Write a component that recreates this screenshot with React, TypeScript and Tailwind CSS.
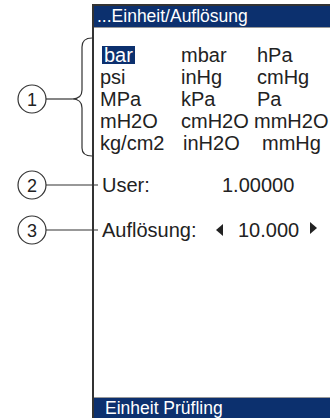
import React from 'react';

const units: [string, string][][] = [
  [['bar', ''], ['mbar', ''], ['hPa', '']],
  [['psi', ''], ['inHg', ''], ['cmHg', '']],
  [['MPa', ''], ['kPa', ''], ['Pa', '']],
  [['mH2O', ''], ['cmH2O', ''], ['mmH2O', '-ml-[3px]']],
  [['kg/cm2', ''], ['inH2O', 'ml-[2px]'], ['mmHg', 'ml-[5px]']],
];

function Callouts() {
  return (
    <svg width="92" height="418" viewBox="0 0 92 418" className="shrink-0 overflow-visible">
      <g stroke="#333" strokeWidth="1.2" fill="none">
        <path d="M92 38 C86 38 82 40 82 47 L82 90 C82 96 78 99 72 99 C78 99 82 102 82 108 L82 148 C82 154 86 156 92 156" />
        <line x1="46" y1="99" x2="72" y2="99" />
        <line x1="46" y1="185" x2="98" y2="185" />
        <line x1="46" y1="230" x2="98" y2="230" />
        <circle cx="32" cy="99" r="14" fill="#fff" />
        <circle cx="32" cy="185" r="14" fill="#fff" />
        <circle cx="32" cy="230" r="14" fill="#fff" />
      </g>
      <g fill="#222" fontSize="18" fontFamily="'Liberation Sans', Arial, sans-serif" textAnchor="middle">
        <text x="32" y="105.5">1</text>
        <text x="32" y="191.5">2</text>
        <text x="32" y="236.5">3</text>
      </g>
    </svg>
  );
}

export default function App() {
  return (
    <div className="w-[330px] h-[418px] bg-white flex overflow-hidden font-['Liberation_Sans',Arial,sans-serif] text-[#222]">
      <Callouts />
      <div className="w-[260px] shrink-0 mt-[4px] border-l-2 border-t-2 border-[#333] flex flex-col">
        <div className="h-[22px] bg-[#0c306e] text-white text-[17.5px] leading-[21px] pl-[3px] border-b border-[#9a9a9a] whitespace-nowrap">
          ...Einheit/Auflösung
        </div>
        <div className="grid grid-cols-[81px_76px_1fr] pl-[6px] pt-[16px] text-[20px] leading-[22px]">
          {units.flat().map(([u, cls]) => (
            <div key={u} className={`whitespace-nowrap ${cls}`}>
              {u === 'bar' ? (
                <span className="inline-block bg-[#0c306e] text-white leading-[18px] px-[2px] ml-[2px]">bar</span>
              ) : (
                u
              )}
            </div>
          ))}
        </div>
        <div className="flex items-center pl-[8px] mt-[20px] text-[20px] leading-[22px]">
          <span className="w-[114px]">User:</span>
          <span className="ml-[6px]">1.00000</span>
        </div>
        <div className="flex items-center pl-[8px] mt-[23px] text-[20px] leading-[22px]">
          <span className="w-[114px]">Auflösung:</span>
          <svg width="7" height="12" viewBox="0 0 7 12" className="shrink-0">
            <polygon points="7,0 7,12 0,6" fill="#222" />
          </svg>
          <span className="ml-[15px]">10.000</span>
          <svg width="7" height="12" viewBox="0 0 7 12" className="shrink-0 ml-[11px] -mt-[4px]">
            <polygon points="0,0 7,6 0,12" fill="#222" />
          </svg>
        </div>
        <div className="mt-auto h-[21px] bg-[#0c306e] border-t border-[#9a9a9a] text-white text-[17.5px] leading-[20px] pl-[11px] whitespace-nowrap">
          Einheit Prüfling
        </div>
      </div>
    </div>
  );
}
